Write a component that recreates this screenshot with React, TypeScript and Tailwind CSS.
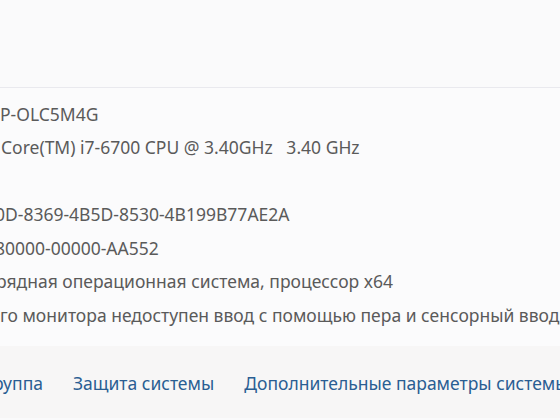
import { memo } from 'react';

const rows: { text: string; shift: number }[] = [
    { text: 'P-OLC5M4G', shift: 0 },
    { text: 'Core(TM) i7-6700 CPU @ 3.40GHz\u00a0\u00a0\u00a03.40 GHz', shift: 1 },
    { text: '', shift: 0 },
    { text: '0D-8369-4B5D-8530-4B199B77AE2A', shift: -5 },
    { text: '80000-00000-AA552', shift: -5 },
    { text: 'рядная операционная система, процессор x64', shift: -4 },
    { text: 'го монитора недоступен ввод с помощью пера и сенсорный ввод', shift: 0 },
];

function InfoRow({ text, shift }: { text: string; shift: number }) {
    return (
        <div className="h-[33.5px] flex items-center overflow-hidden whitespace-nowrap">
            <span style={{ marginLeft: shift }}>{text}</span>
        </div>
    );
}

function App() {
    return (
        <div className="w-[560px] h-[420px] overflow-hidden bg-[#fafafb] text-[17.5px] text-[#5a5a5a] font-['Noto_Sans','Open_Sans',sans-serif]">
            <div className="h-[88px] border-b border-[#e9e9ee]" />
            <div className="pt-[9px] pb-[14px] border-b border-[#e6e6ea] bg-[#fbfbfc]">
                {rows.map((r, i) => (
                    <InfoRow key={i} text={r.text} shift={r.shift} />
                ))}
            </div>
            <div className="h-[72px] pt-[3px] bg-[#f7f6f6] flex items-center gap-[30px] whitespace-nowrap text-[#2a5e93] -mt-px">
                <span className="-ml-[7px]">руппа</span>
                <span>Защита системы</span>
                <span>Дополнительные параметры системы</span>
            </div>
        </div>
    );
}

export default memo(App);
